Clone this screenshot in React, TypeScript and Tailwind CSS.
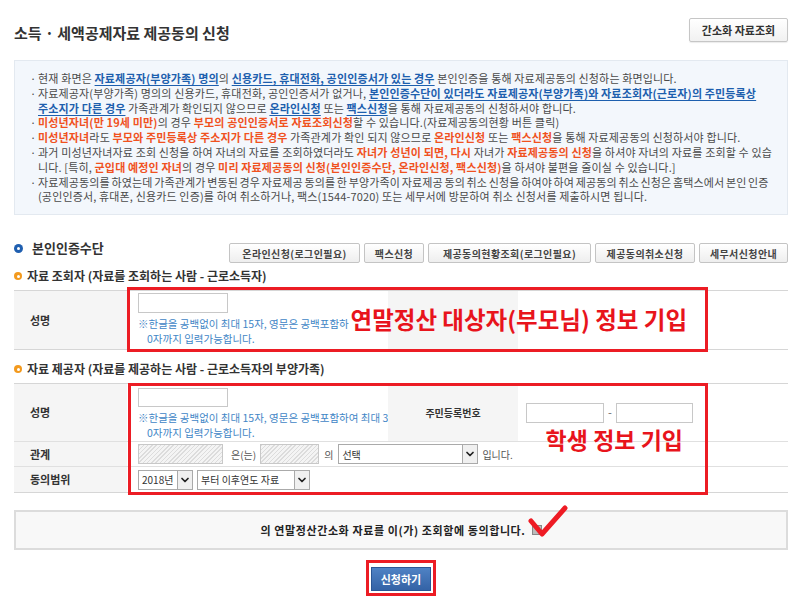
import { ChevronDown } from "lucide-react";
import type { ReactNode } from "react";

const B = ({ children }: { children: ReactNode }) => (
  <span className="font-bold text-[#1d5fae] underline underline-offset-2">{children}</span>
);
const O = ({ children }: { children: ReactNode }) => (
  <span className="font-bold text-[#f0521f]">{children}</span>
);

function Line({ children, bullet = true, tight = false }: { children: ReactNode; bullet?: boolean; tight?: boolean }) {
  return (
    <div className={`flex whitespace-nowrap ${tight ? "[word-spacing:-1px]" : ""}`}>
      <span className="w-[8px] shrink-0">{bullet ? "·" : ""}</span>
      <span>{children}</span>
    </div>
  );
}

function Select({ label, width }: { label: string; width: string }) {
  return (
    <div className={`flex h-[20px] items-stretch border border-[#aaa] bg-white ${width}`}>
      <span className="flex flex-1 items-center pl-[3px] text-[10px] text-[#333]">{label}</span>
      <span className="flex w-[15px] items-center justify-center border-l border-[#aaa] bg-[#f0f0f0]">
        <ChevronDown size={12} strokeWidth={3.5} className="text-[#222]" />
      </span>
    </div>
  );
}

const hatch =
  "bg-[repeating-linear-gradient(135deg,#dcdcdc_0px,#dcdcdc_1px,#f4f4f4_1px,#f4f4f4_3px)] border border-[#c8c8c8]";

function SubHeading({ children }: { children: ReactNode }) {
  return (
    <div className="flex h-[14px] items-center gap-[5px] text-[12px] font-bold leading-[14px] text-[#333]">
      <span className="flex h-[8px] w-[8px] items-center justify-center rounded-full bg-[#f39a1e]">
        <span className="h-[3px] w-[3px] rounded-full bg-white" />
      </span>
      {children}
    </div>
  );
}

export default function App() {
  return (
    <div className="min-h-[600px] w-[796px] bg-white pl-[14px] pr-[8px] font-['Noto_Sans_CJK_KR',sans-serif] text-[#444]">
      <header className="flex h-[60px] items-start justify-between">
        <h1 className="pt-[23px] text-[15px] font-bold leading-[20px] text-[#333]">
          소득 · 세액공제자료 제공동의 신청
        </h1>
        <button className="mt-[18px] h-[24px] w-[99px] rounded-[2px] border border-[#c6c6c6] bg-gradient-to-b from-white to-[#f1f1f1] text-[11px] font-bold text-[#333] shadow-[0_1px_1px_rgba(0,0,0,0.08)]">
          간소화 자료조회
        </button>
      </header>

      <section className="h-[155px] border border-[#e3e9f0] bg-[#f3f7fc] pl-[15px] pt-[10px] text-[11px] leading-[14.8px] tracking-[0.15px] text-[#4a4a4a]">
        <Line>
          현재 화면은 <B>자료제공자(부양가족) 명의</B>의 <B>신용카드, 휴대전화, 공인인증서가 있는 경우</B> 본인인증을 통해 자료제공동의 신청하는 화면입니다.
        </Line>
        <Line>
          자료제공자(부양가족) 명의의 신용카드, 휴대전화, 공인인증서가 없거나, <B>본인인증수단이 있더라도 자료제공자(부양가족)와 자료조회자(근로자)의 주민등록상</B>
        </Line>
        <Line bullet={false}>
          <B>주소지가 다른 경우</B> 가족관계가 확인되지 않으므로 <B>온라인신청</B> 또는 <B>팩스신청</B>을 통해 자료제공동의 신청하서야 합니다.
        </Line>
        <Line>
          <O>미성년자녀(만 19세 미만)</O>의 경우 <O>부모의 공인인증서로 자료조회신청</O>할 수 있습니다.(자료제공동의현황 버튼 클릭)
        </Line>
        <Line>
          <O>미성년자녀</O>라도 <O>부모와 주민등록상 주소지가 다른 경우</O> 가족관계가 확인 되지 않으므로 <O>온라인신청</O> 또는 <O>팩스신청</O>을 통해 자료제공동의 신청하서야 합니다.
        </Line>
        <Line>
          과거 미성년자녀자료 조회 신청을 하여 자녀의 자료를 조회하였더라도 <O>자녀가 성년이 되면, 다시</O> 자녀가 <O>자료제공동의 신청</O>을 하셔야 자녀의 자료를 조회할 수 있습
        </Line>
        <Line bullet={false}>
          니다. [특히, <O>군입대 예정인 자녀</O>의 경우 <O>미리 자료제공동의 신청(본인인증수단, 온라인신청, 팩스신청)</O>을 하셔야 불편을 줄이실 수 있습니다.]
        </Line>
        <Line tight>
          자료제공동의를 하였는데 가족관계가 변동된 경우 자료제공 동의를 한 부양가족이 자료제공 동의 취소 신청을 하여야 하여 제공동의 취소 신청은 홈택스에서 본인 인증
        </Line>
        <Line bullet={false}>
          (공인인증서, 휴대폰, 신용카드 인증)를 하여 취소하거나, 팩스(1544-7020) 또는 세무서에 방문하여 취소 신청서를 제출하시면 됩니다.
        </Line>
      </section>

      <div className="mt-[25px] flex h-[23px] items-start justify-between">
        <div className="flex h-[16px] items-center gap-[9px] text-[13px] font-bold text-[#333]">
          <span className="flex h-[9px] w-[9px] items-center justify-center rounded-full bg-[#1f5fb0]">
            <span className="h-[3px] w-[3px] rounded-full bg-white" />
          </span>
          본인인증수단
        </div>
        <div className="mt-[3px] flex gap-[4px] text-[10px] tracking-[0.4px] text-[#444]">
          {[
            ["온라인신청(로그인필요)", "w-[131px]"],
            ["팩스신청", "w-[60px]"],
            ["제공동의현황조회(로그인필요)", "w-[163px]"],
            ["제공동의취소신청", "w-[100px]"],
            ["세무서신청안내", "w-[89px]"],
          ].map(([t, w]) => (
            <button
              key={t}
              className={`h-[20px] ${w} rounded-[2px] border border-[#c4c4c4] bg-gradient-to-b from-white to-[#eeeeee] font-bold`}
            >
              {t}
            </button>
          ))}
        </div>
      </div>

      <div className="mt-[6px]">
        <SubHeading>자료 조회자 (자료를 조회하는 사람 - 근로소득자)</SubHeading>
      </div>

      <div className="relative mt-[7px] grid h-[60px] grid-cols-[113px_261px_130px_1fr] border-y border-[#d6d6d6] text-[11px]">
        <div className="flex items-center bg-[#f5f5f5] pl-[16px] font-bold text-[#333]">성명</div>
        <div className="pl-[11px] pt-[2px]">
          <div className="h-[20px] w-[90px] border border-[#c8c8c8] bg-white" />
          <div className="mt-[3px] whitespace-nowrap text-[10.5px] leading-[15px] text-[#3f86c6]">
            <div>※한글을 공백없이 최대 15자, 영문은 공백포함하</div>
            <div className="pl-[9px]">0자까지 입력가능합니다.</div>
          </div>
        </div>
        <div className="bg-[#f5f5f5]" />
        <div />
        <div className="absolute left-[113px] top-[-4px] flex h-[65px] w-[581px] items-center justify-end border-[3px] border-[#ec1c24] pr-[18px] text-[23.5px] font-bold text-[#e8141c]">
          연말정산 대상자(부모님) 정보 기입
        </div>
      </div>

      <div className="mt-[12px]">
        <SubHeading>자료 제공자 (자료를 제공하는 사람 - 근로소득자의 부양가족)</SubHeading>
      </div>

      <div className="relative mt-[7px] grid grid-cols-[113px_261px_130px_1fr] border-y border-[#d6d6d6] text-[11px]">
        <div className="flex h-[58px] items-center border-b border-[#e0e0e0] bg-[#f5f5f5] pl-[16px] font-bold text-[#333]">
          성명
        </div>
        <div className="border-b border-[#e0e0e0] pl-[11px] pt-[4px]">
          <div className="h-[19px] w-[90px] border border-[#c8c8c8] bg-white" />
          <div className="mt-[3px] whitespace-nowrap text-[10.5px] leading-[15px] text-[#3f86c6]">
            <div>※한글을 공백없이 최대 15자, 영문은 공백포함하여 최대 3</div>
            <div className="pl-[9px]">0자까지 입력가능합니다.</div>
          </div>
        </div>
        <div className="flex items-center justify-center border-b border-[#e0e0e0] bg-[#f5f5f5] text-[10px] font-bold text-[#333]">
          주민등록번호
        </div>
        <div className="flex items-center gap-[4px] border-b border-[#e0e0e0] pl-[8px]">
          <div className="h-[20px] w-[78px] border border-[#c8c8c8] bg-white" />
          <span className="text-[#666]">-</span>
          <div className="h-[20px] w-[77px] border border-[#c8c8c8] bg-white" />
        </div>

        <div className="flex h-[25px] items-center border-b border-[#e0e0e0] bg-[#f5f5f5] pl-[16px] font-bold text-[#333]">
          관계
        </div>
        <div className="col-span-3 flex items-center border-b border-[#e0e0e0] pl-[11px] text-[10px] text-[#555]">
          <div className={`h-[20px] w-[85px] ${hatch}`} />
          <span className="ml-[8px] mr-[4px]">은(는)</span>
          <div className={`h-[20px] w-[59px] ${hatch}`} />
          <span className="ml-[5px] mr-[5px]">의</span>
          <Select label="선택" width="w-[140px]" />
          <span className="ml-[4px]">입니다.</span>
        </div>

        <div className="flex h-[25px] items-center bg-[#f5f5f5] pl-[16px] font-bold text-[#333]">
          동의범위
        </div>
        <div className="col-span-3 flex items-center gap-[4px] pl-[11px]">
          <Select label="2018년" width="w-[55px]" />
          <Select label="부터 이후연도 자료" width="w-[113px]" />
        </div>

        <div className="absolute left-[114px] top-[-1px] flex h-[112px] w-[580px] items-center justify-end border-[3px] border-[#ec1c24] pr-[22px] text-[23px] font-bold text-[#e8141c]">
          학생 정보 기입
        </div>
      </div>

      <div className="relative mt-[17px] flex h-[40px] items-center justify-center gap-[6px] border-2 border-[#dcdcdc] bg-[#f8f8f8] text-[11px] font-bold tracking-[0.6px] text-[#222]">
        <span>의 연말정산간소화 자료를 이(가) 조회함에 동의합니다.</span>
        <span className="h-[10px] w-[10px] border border-[#888] bg-[#bbb]" />
        <svg className="absolute left-[508px] top-[-10px]" width="48" height="36" viewBox="0 0 48 36">
          <path
            d="M7 19 L18 32 L41 6"
            fill="none"
            stroke="#ee1b24"
            strokeWidth="5"
            strokeLinecap="round"
            strokeLinejoin="round"
          />
        </svg>
      </div>

      <div className="mt-[10px] flex justify-center">
        <div className="border-[3px] border-[#ec1c24] p-[2px]">
          <button className="h-[24px] w-[60px] border border-[#2a5694] bg-gradient-to-b from-[#4f82c4] to-[#3463a6] text-[11px] font-bold text-white">
            신청하기
          </button>
        </div>
      </div>
    </div>
  );
}
